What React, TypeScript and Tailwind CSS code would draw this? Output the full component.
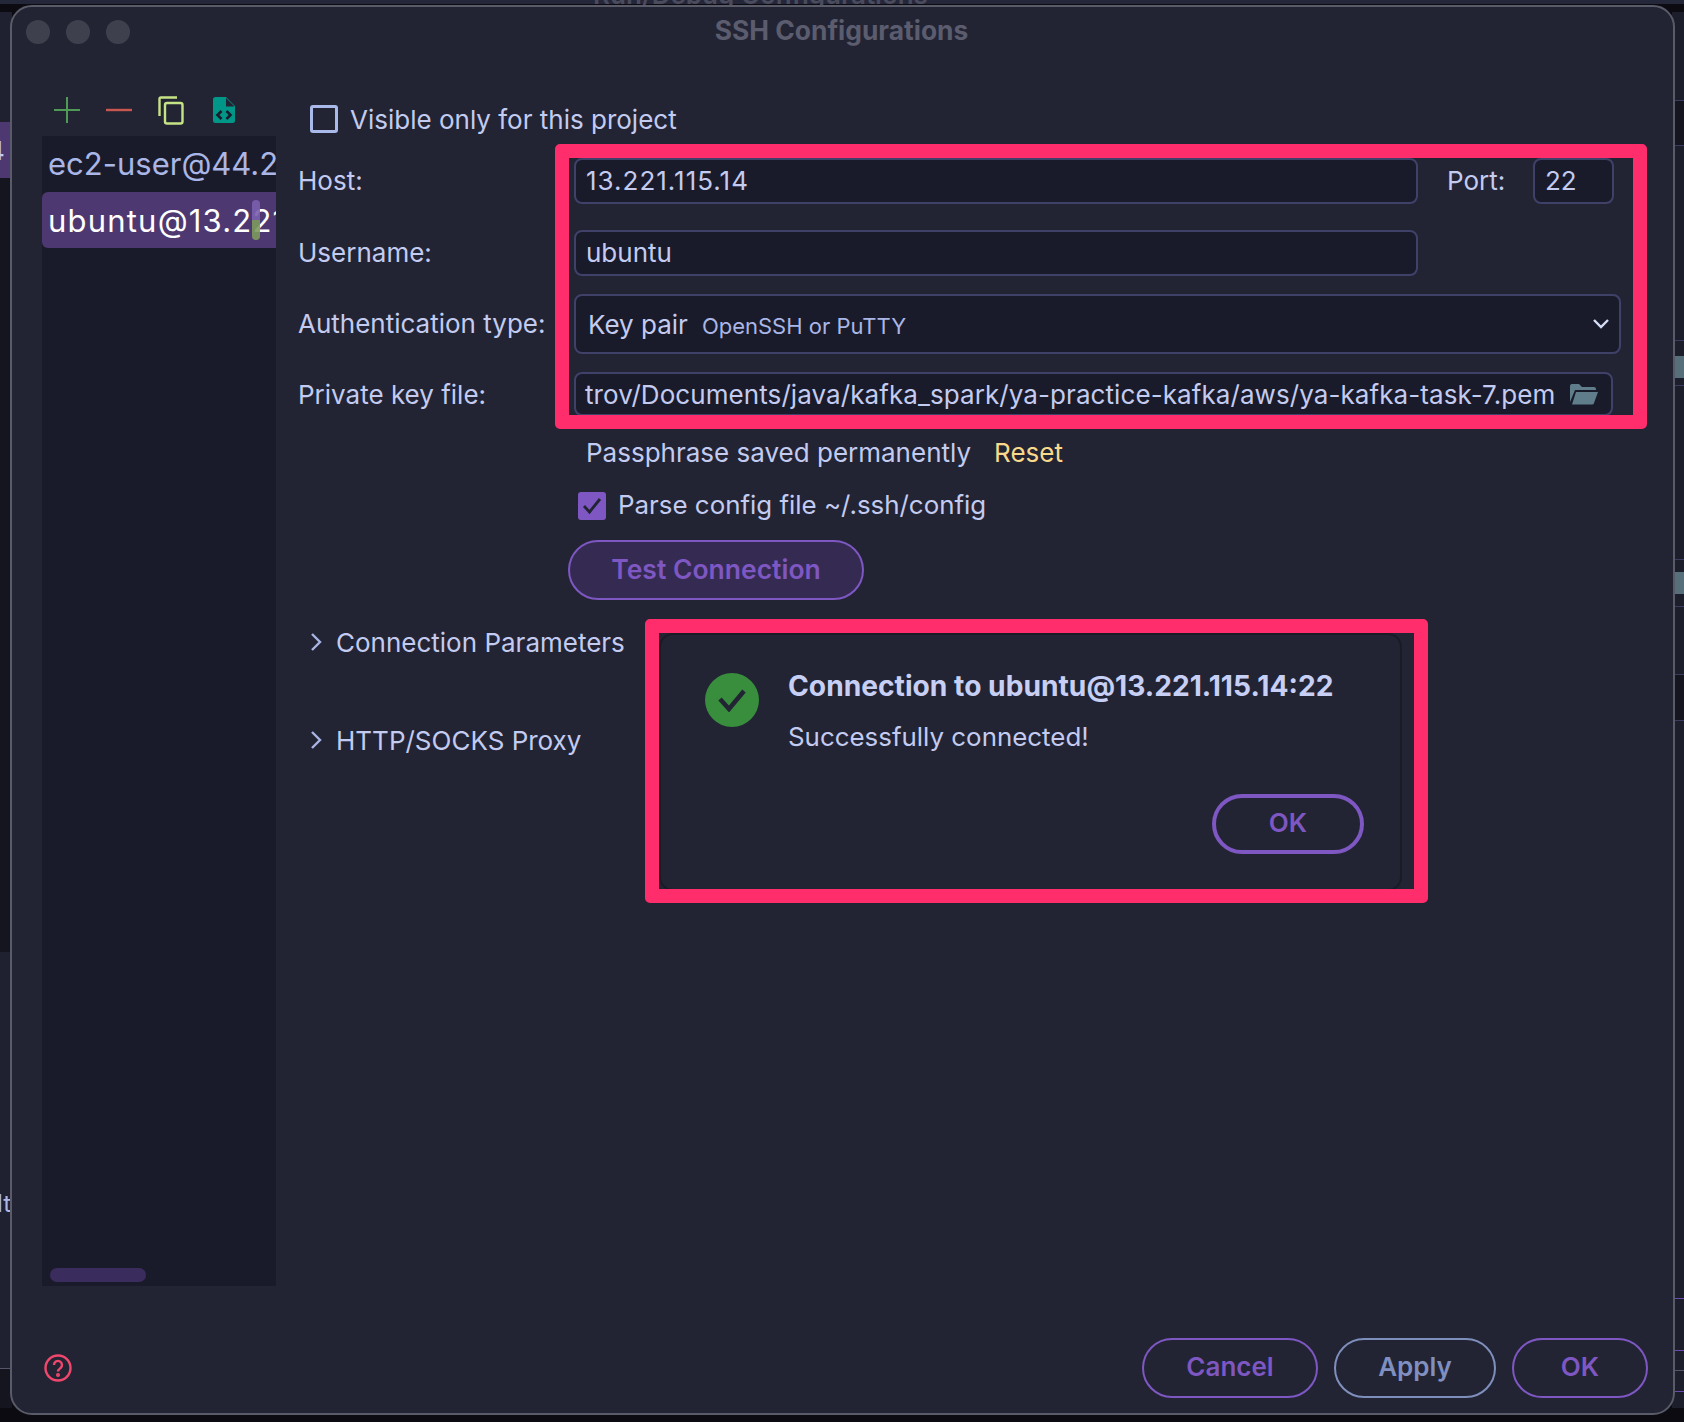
import React from 'react';

const font = { fontFamily: 'Inter, "Liberation Sans", sans-serif' };

// stray bits of the IDE window showing on the right of the dialog
const rightLines = [
  { y: 100, color: '#3a3c62' },
  { y: 145, color: '#3a3c62' },
  { y: 340, color: '#3a3c62' },
  { y: 385, color: '#3a3c62' },
  { y: 559, color: '#3a3c62' },
  { y: 606, color: '#3a3c62' },
  { y: 674, color: '#3a3c62' },
  { y: 720, color: '#3a3c62' },
  { y: 1298, color: '#6a4bb0' },
  { y: 1350, color: '#6a4bb0' },
  { y: 1370, color: '#55566a' },
  { y: 1391, color: '#6a4bb0' },
];

const Row: React.FC<{ label: string; className?: string; labelClass?: string; children: React.ReactNode }> = ({
  label,
  className,
  labelClass = 'pb-[2px]',
  children,
}) => (
  <div className={`flex items-center ${className ?? ''}`}>
    <span className={`w-[276px] shrink-0 text-[26px] text-[#c3cbf0] ${labelClass}`}>{label}</span>
    {children}
  </div>
);

const Field: React.FC<{ className?: string; children: React.ReactNode }> = ({ className, children }) => (
  <div className={`flex items-center rounded-lg border-2 border-[#3f4169] bg-[#1a1b2a] text-[26px] text-[#c3cbf0] ${className ?? ''}`}>
    {children}
  </div>
);

const Disclosure: React.FC<{ label: string; className?: string }> = ({ label, className }) => (
  <div className={`flex items-center text-[26px] text-[#c3cbf0] ${className ?? ''}`}>
    <svg width="12" height="20" viewBox="0 0 12 20" className="ml-[12px] mr-[14px]" fill="none" stroke="#a9b4e4" strokeWidth="2.4">
      <path d="M2 2l8 8-8 8" />
    </svg>
    {label}
  </div>
);

const PillButton: React.FC<{ className: string; children: React.ReactNode }> = ({ className, children }) => (
  <div className={`flex h-[60px] items-center justify-center rounded-full border-2 font-semibold ${className}`}>
    {children}
  </div>
);

const App: React.FC = () => {
  return (
    <div className="relative h-[1422px] w-[1684px] overflow-hidden bg-[#0b0b11]" style={font}>
      {/* bits of the IDE behind the dialog */}
      <div className="absolute left-0 top-0 h-[4px] w-full bg-[#24263a]" />
      <div className="absolute left-[593px] top-[-17px] text-[26px] font-semibold leading-[24px] text-[#4a4b5c]">Run/Debug Configurations</div>
      <div className="absolute left-0 top-[12px] h-[110px] w-[12px] bg-[#1f2030]" />
      <div className="absolute left-0 top-[122px] h-[56px] w-[12px] overflow-hidden bg-[#4e3871]">
        <span className="absolute left-[-12px] top-[14px] text-[26px] leading-[30px] text-[#c3cbf0]">4</span>
      </div>
      <div className="absolute left-0 top-[178px] h-[774px] w-[12px] bg-[#14151f]" />
      <div className="absolute left-0 top-[952px] h-[416px] w-[12px] bg-[#1f2030]">
        <span className="absolute left-[-3px] top-[238px] text-[24px] leading-[28px] text-[#a9b6e6]">lt</span>
      </div>
      <div className="absolute left-0 top-[1368px] h-[40px] w-[12px] border-t border-[#55566a] bg-[#14151f]" />
      <div className="absolute right-0 top-[12px] h-[1396px] w-[12px] bg-[#1d1e2c]" />
      <div className="absolute right-0 top-[100px] h-[45px] w-[12px] bg-[#14151f]" />
      <div className="absolute right-0 top-[674px] h-[46px] w-[12px] bg-[#14151f]" />
      <div className="absolute right-0 top-[356px] h-[22px] w-[9px] bg-[#566f7a]" />
      <div className="absolute right-0 top-[572px] h-[22px] w-[9px] bg-[#566f7a]" />
      {rightLines.map(line => (
        <div
          key={line.y}
          className="absolute right-0 h-[1px] w-[12px]"
          style={{ top: line.y, backgroundColor: line.color }}
        />
      ))}

      <div className="relative ml-[10px] mt-[5px] flex h-[1410px] w-[1665px] flex-col rounded-[22px] border-2 border-[#5a5b69] bg-[#222434]">
        {/* title bar */}
        <div className="relative flex h-[52px] shrink-0 items-center justify-center pb-[5px] pr-[2px]">
          <div className="absolute left-[14px] top-[13px] flex gap-[16px]">
            <div className="h-[24px] w-[24px] rounded-full bg-[#3f404e]" />
            <div className="h-[24px] w-[24px] rounded-full bg-[#3f404e]" />
            <div className="h-[24px] w-[24px] rounded-full bg-[#3f404e]" />
          </div>
          <span className="text-[26.4px] font-bold text-[#5b5c6e]">SSH Configurations</span>
        </div>

        <div className="flex min-h-0 flex-1">
          {/* left list */}
          <div className="ml-[30px] flex w-[234px] shrink-0 flex-col">
            <div className="flex h-[77px] shrink-0 items-center pl-[12px] pt-[25px]">
              <svg width="26" height="26" viewBox="0 0 26 26" fill="none" stroke="#4f9a55" strokeWidth="2">
                <path d="M13 0v26M0 13h26" />
              </svg>
              <svg width="26" height="26" viewBox="0 0 26 26" fill="none" stroke="#c9564f" strokeWidth="2.4" className="ml-[26px]">
                <path d="M0 13h26" />
              </svg>
              <svg width="26" height="29" viewBox="0 0 26 29" fill="none" stroke="#c5e384" strokeWidth="2.4" className="ml-[26px]">
                <path d="M1.500 20V3C1.500 2 2 1.500 3 1.500H19" />
                <rect x="7" y="7" width="17.500" height="20.500" rx="2" />
              </svg>
              <svg width="22" height="26" viewBox="0 0 22 26" className="ml-[29px]">
                <path d="M2.500 0H13l9 9v14.500a2.500 2.500 0 0 1-2.500 2.500h-17A2.500 2.500 0 0 1 0 23.500v-21A2.500 2.500 0 0 1 2.500 0z" fill="#009688" />
                <path d="M13 1v8.500h8.500z" fill="#222434" />
                <path d="M8.500 14l-4 4 4 4M13.500 14l4 4-4 4" fill="none" stroke="#1a1b2a" strokeWidth="2.600" />
              </svg>
            </div>
            <div className="relative min-h-0 flex-1 overflow-hidden bg-[#1a1b2a] text-[31px]">
              <div className="flex h-[56px] items-center whitespace-nowrap pl-[6px] text-[#a9b6e6]">ec2-user@44.2</div>
              <div className="flex h-[56px] items-center whitespace-nowrap rounded-l-md bg-[#4e3871] pl-[6px] pt-[2px] tracking-[1.2px] text-white">ubuntu@13.221</div>
              <div className="absolute left-[210px] top-[64px] h-[40px] w-[8px] rounded-full bg-[linear-gradient(#7a5fae_50%,#7d9a5c_50%)] opacity-90" />
              <div className="absolute bottom-[4px] left-[8px] h-[14px] w-[96px] rounded-full bg-[#3b2c5e]" />
            </div>
          </div>

          {/* form */}
          <div className="ml-[22px] min-w-0 flex-1">
            <div className="mt-[32px] flex h-[56px] items-center pl-[12px] text-[26px] text-[#c3cbf0]">
              <div className="h-[28px] w-[28px] rounded-[3px] border-[3px] border-[#a9b9ea]" />
              <span className="ml-[12px]">Visible only for this project</span>
            </div>
            <Row label="Host:" className="mt-[11px] h-[46px]">
              <Field className="h-[46px] w-[844px] pb-[2px] pl-[10px] tracking-[1px]">13.221.115.14</Field>
              <span className="ml-[29px] w-[86px] pb-[2px] text-[26px] text-[#c3cbf0]">Port:</span>
              <Field className="h-[46px] w-[81px] pb-[2px] pl-[10px]">22</Field>
            </Row>
            <Row label="Username:" className="mt-[26px] h-[46px]">
              <Field className="h-[46px] w-[844px] pb-[2px] pl-[10px]">ubuntu</Field>
            </Row>
            <Row label="Authentication type:" className="mt-[18px] h-[60px]">
              <Field className="h-[60px] w-[1047px] justify-between pl-[12px] pr-[10px]">
                <span>
                  Key pair<span className="ml-[14px] text-[22px] text-[#a9b6e6]">OpenSSH or PuTTY</span>
                </span>
                <svg width="16" height="10" viewBox="0 0 16 10" fill="none" stroke="#d5dcf8" strokeWidth="2.400">
                  <path d="M1 1l7 7 7-7" />
                </svg>
              </Field>
            </Row>
            <Row label="Private key file:" labelClass="" className="mt-[18px] h-[44px]">
              <Field className="h-[44px] w-[1039px] justify-between overflow-hidden whitespace-nowrap pl-[9px] pr-[12px]">
                <span className="tracking-[0.08px]">trov/Documents/java/kafka_spark/ya-practice-kafka/aws/ya-kafka-task-7.pem</span>
                <svg width="30" height="22" viewBox="0 0 30 22" fill="#607d8b" className="shrink-0">
                  <path d="M1 3a2 2 0 0 1 2-2h7l3 3h12a2 2 0 0 1 2 2v1H6L1 19z" />
                  <path d="M7 9h22l-4 11a2 2 0 0 1-2 1.500H3z" />
                </svg>
              </Field>
            </Row>
            <div className="ml-[288px] mt-[16px] flex h-[40px] items-center text-[26px] text-[#c3cbf0]">
              Passphrase saved permanently
              <span className="ml-[23px] text-[#f8d88a]">Reset</span>
            </div>
            <div className="ml-[280px] mt-[20px] flex h-[28px] items-center text-[26px] text-[#c3cbf0]">
              <div className="flex h-[28px] w-[28px] items-center justify-center rounded-[3px] bg-[#7e57c2]">
                <svg width="20" height="18" viewBox="0 0 20 18" fill="none" stroke="#222434" strokeWidth="2.800">
                  <path d="M2 9l5.500 6L18 2" />
                </svg>
              </div>
              <span className="ml-[12px] pb-[2px] text-[25.9px]">Parse config file ~/.ssh/config</span>
            </div>
            <PillButton className="ml-[270px] mt-[20px] w-[296px] border-[#7e57c2] bg-[#352b52] text-[26.5px] text-[#7e57c2]">
              Test Connection
            </PillButton>
            <Disclosure label="Connection Parameters" className="mt-[26px] h-[32px]" />
            <Disclosure label="HTTP/SOCKS Proxy" className="mt-[66px] h-[32px]" />
          </div>
        </div>

        {/* footer */}
        <div className="flex h-[127px] shrink-0 items-start justify-between pl-[32px] pr-[25px]">
          <svg width="28" height="28" viewBox="0 0 28 28" fill="none" stroke="#f0476d" strokeWidth="2.400" className="mt-[68px]">
            <circle cx="14" cy="14" r="12.500" />
            <path d="M10 11a4 4 0 1 1 6.500 3c-1.500 1.200-2.500 1.800-2.500 3.500" />
            <circle cx="14" cy="21" r="0.800" fill="#f0476d" />
          </svg>
          <div className="mt-[52px] flex gap-[16px]">
            <PillButton className="w-[176px] border-[#7e57c2] pb-[3px] text-[26px] text-[#7e57c2]">Cancel</PillButton>
            <PillButton className="w-[162px] border-[#7f8fbc] pb-[3px] text-[26px] text-[#7f8fc0]">Apply</PillButton>
            <PillButton className="w-[136px] border-[#7e57c2] pb-[3px] text-[26px] text-[#7e57c2]">OK</PillButton>
          </div>
        </div>

        {/* connection result popup */}
        <div className="absolute left-[647px] top-[626px] flex h-[258px] w-[743px] rounded-[14px] border-2 border-[#1a1b27] bg-[#222434]">
          <div className="ml-[44px] mt-[38px] flex h-[54px] w-[54px] shrink-0 items-center justify-center rounded-full bg-[#388e3c]">
            <svg width="30" height="24" viewBox="0 0 30 24" fill="none" stroke="#222434" strokeWidth="4.500">
              <path d="M3 11l9 10L27 3" />
            </svg>
          </div>
          <div className="relative ml-[29px] mt-[31px] flex-1">
            <div className="text-[28.2px] font-bold leading-[40px] text-[#c7cff5]">Connection to ubuntu@13.221.115.14:22</div>
            <div className="mt-[11px] text-[25.9px] leading-[40px] text-[#c3cbf0]">Successfully connected!</div>
            <div className="absolute right-[36px] top-[128px] flex h-[60px] w-[152px] items-center justify-center rounded-full border-4 border-[#7e57c2] pb-[4px] text-[26px] font-semibold text-[#7e57c2]">
              OK
            </div>
          </div>
        </div>
      </div>

      {/* red annotations */}
      <div className="absolute left-[555px] top-[144px] h-[285px] w-[1092px] rounded-[5px] border-[14px] border-[#ff2d6b]" />
      <div className="absolute left-[645px] top-[619px] h-[284px] w-[783px] rounded-[5px] border-[14px] border-[#ff2d6b]" />
    </div>
  );
};

export default App;
